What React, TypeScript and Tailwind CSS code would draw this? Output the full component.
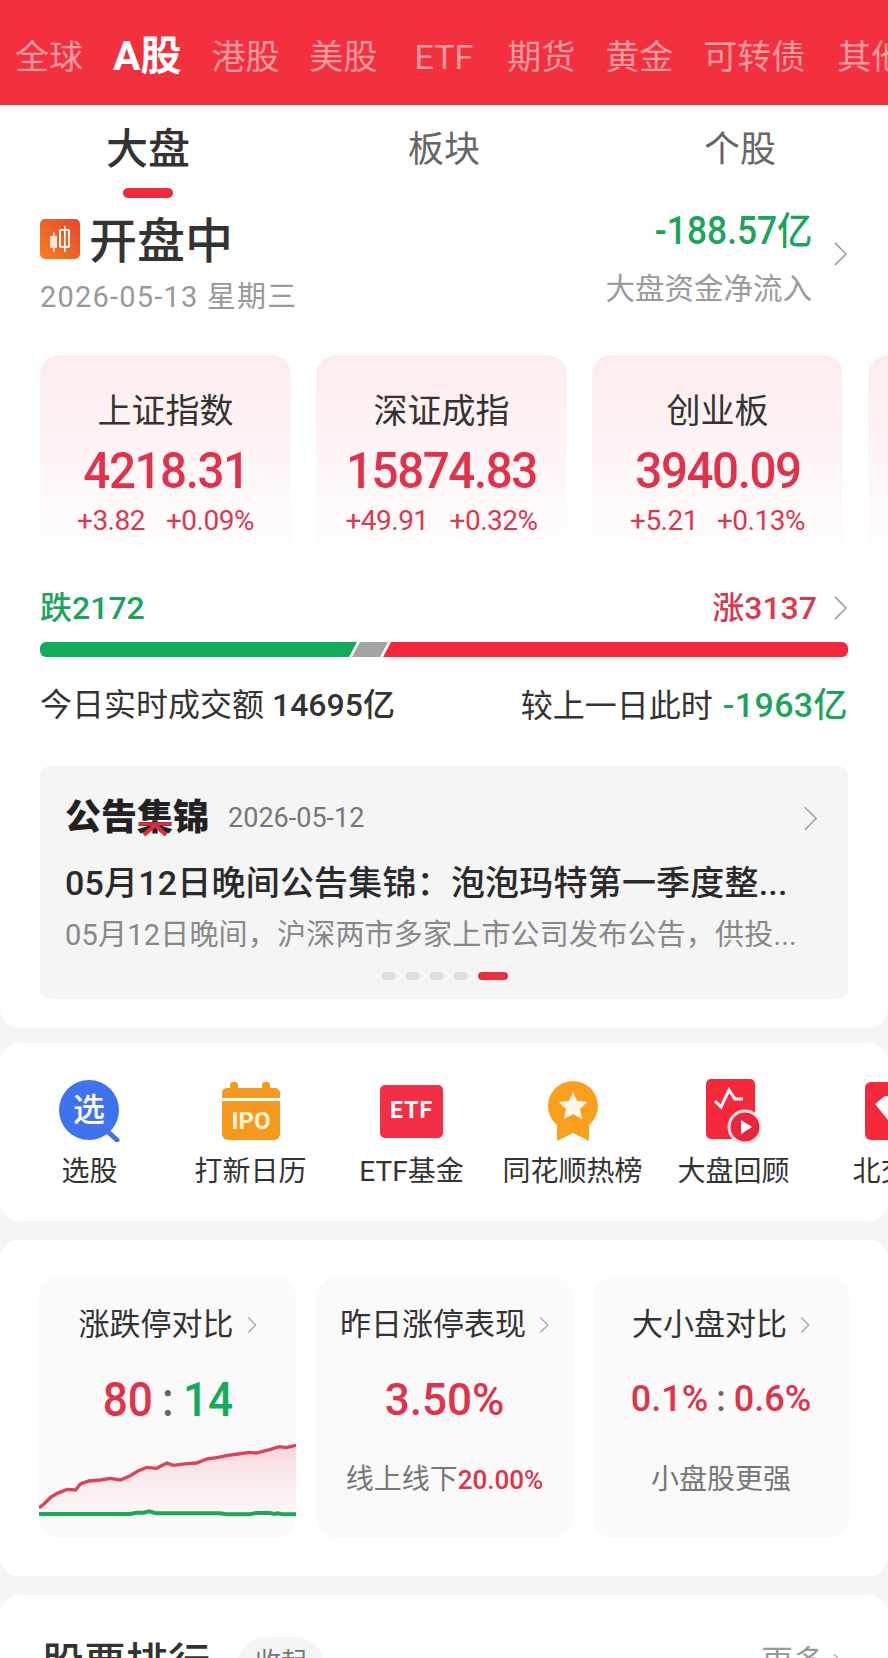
import React from "react";

const FONT = "font-['Roboto','Noto_Sans_CJK_SC',sans-serif]";

function Chevron({ className }: { className: string }) {
  return (
    <svg viewBox="0 0 16 28" fill="none" className={className}>
      <path d="M2 2 L14 14 L2 26" stroke="#a0a0a0" strokeWidth="1.8" strokeLinejoin="round" />
    </svg>
  );
}

function IndexCard({ name, value, a, b, gap }: { name: string; value: string; a: string; b: string; gap: string }) {
  return (
    <div className="w-[251px] h-[218px] shrink-0 rounded-[20px] bg-gradient-to-b from-[#fdecee] to-[#ffffff] flex flex-col items-center pt-[37px]">
      <div className="h-[38px] text-[34px] leading-[38px] text-[#333333]">{name}</div>
      <div className="h-[52px] mt-[15px] text-[50px] leading-[52px] font-medium text-[#e0324a] tracking-[-1.5px] scale-x-[.95]">{value}</div>
      <div className={`h-[32px] mt-[8px] flex ${gap} text-[28px] leading-[32px] text-[#d9394e] tracking-[-0.5px]`}>
        <span>{a}</span>
        <span>{b}</span>
      </div>
    </div>
  );
}

function Quick({ label, children }: { label: string; children: React.ReactNode }) {
  return (
    <div className="w-[161px] shrink-0 flex flex-col items-center">
      <div className="h-[68px] flex items-center justify-center">{children}</div>
      <div className="mt-[10px] text-[28px] leading-[34px] text-[#333333] whitespace-nowrap">{label}</div>
    </div>
  );
}

const redPts =
  "25,322 40,310 60,290 80,278 110,266 135,268 150,250 175,241 210,238 240,233 270,238 300,225 325,210 350,200 380,203 410,187 430,194 470,189 500,187 530,175 565,170 590,165 625,160 660,155 680,157 720,147 750,138 770,141 800,134";
const greenPts =
  "25,340 300,340 320,336 340,336 358,332 378,338 570,338 590,341 660,341 680,337 720,337 735,340 745,338 760,341 800,341";

function StatCard({ title, children, className }: { title: string; children: React.ReactNode; className: string }) {
  return (
    <div className={`${className} h-[261px] rounded-[20px] bg-[#fafafa] overflow-hidden flex flex-col items-center pt-[31px]`}>
      <div className="flex items-center gap-[13px] h-[34px]">
        <span className="text-[31px] leading-[34px] text-[#333333] whitespace-nowrap">{title}</span>
        <Chevron className="w-[10px] h-[20px]" />
      </div>
      {children}
    </div>
  );
}

export default function App() {
  return (
    <div className={`${FONT} w-[888px] h-[1658px] overflow-hidden bg-[#f5f5f5]`}>
      <div className="h-[105px] bg-[#f3303e] flex items-center pl-[15px] gap-[30px] pt-[9px] overflow-hidden whitespace-nowrap text-[34px] text-[#fb9aa0]">
        <span className="shrink-0">全球</span>
        <span className="shrink-0 text-[41px] font-bold text-white">A股</span>
        <span className="shrink-0">港股</span>
        <span className="shrink-0">美股</span>
        <span className="shrink-0 pl-[7px] pr-[4px]">ETF</span>
        <span className="shrink-0">期货</span>
        <span className="shrink-0">黄金</span>
        <span className="shrink-0">可转债</span>
        <span className="shrink-0 ml-[2px]">其他</span>
      </div>

      <div className="h-[923px] bg-white rounded-b-[20px]">
        <div className="grid grid-cols-3 h-[94px]">
          <div className="flex flex-col items-center pt-[21px]">
            <span className="text-[42px] leading-[48px] font-medium text-[#333333]">大盘</span>
            <span className="mt-[14px] w-[50px] h-[10px] rounded-full bg-[#ee2b3c]"></span>
          </div>
          <div className="flex flex-col items-center pt-[21px]">
            <span className="text-[36px] leading-[48px] text-[#666666]">板块</span>
          </div>
          <div className="flex flex-col items-center pt-[21px]">
            <span className="text-[36px] leading-[48px] text-[#666666]">个股</span>
          </div>
        </div>

        <div className="flex justify-between pl-[40px] pr-[40px] h-[156px] pt-[12px]">
          <div>
            <div className="flex items-center gap-[9px] h-[56px]">
              <svg viewBox="0 0 40 40" className="w-[40px] h-[40px]">
                <defs>
                  <linearGradient id="kg" x1="1" y1="0" x2="0" y2="1">
                    <stop offset="0" stopColor="#e8452c" />
                    <stop offset="1" stopColor="#f68022" />
                  </linearGradient>
                </defs>
                <rect width="40" height="40" rx="5" fill="url(#kg)" />
                <rect x="10" y="17" width="7" height="12" rx="1" fill="#ffe6d8" />
                <rect x="13" y="13" width="1.6" height="20" fill="#ffe6d8" />
                <rect x="20" y="11" width="9" height="17" rx="1" fill="none" stroke="#fff" strokeWidth="2" />
                <rect x="24" y="7" width="1.6" height="26" fill="#fff" />
              </svg>
              <span className="text-[48px] leading-[56px] font-medium text-[#333333] mt-[6px]">开盘中</span>
            </div>
            <div className="mt-[13px] text-[29px] leading-[34px] text-[#999999] whitespace-nowrap tracking-[1.2px]">2026-05-13 星期三</div>
          </div>
          <div className="flex items-start gap-[21px] h-[100px]">
            <div className="flex flex-col items-end mt-[-1px]">
              <div className="text-[38px] leading-[42px] font-medium text-[#1ca45c] whitespace-nowrap origin-right scale-x-[.93]">-188.57亿</div>
              <div className="mt-[21px] text-[29.5px] leading-[32px] text-[#9a9a9a] whitespace-nowrap">大盘资金净流入</div>
            </div>
            <Chevron className="w-[15px] h-[26px] mt-[30px]" />
          </div>
        </div>

        <div className="flex gap-[25px] pl-[40px] overflow-hidden">
          <IndexCard name="上证指数" value="4218.31" a="+3.82" b="+0.09%" gap="gap-[21px]" />
          <IndexCard name="深证成指" value="15874.83" a="+49.91" b="+0.32%" gap="gap-[21px]" />
          <IndexCard name="创业板" value="3940.09" a="+5.21" b="+0.13%" gap="gap-[19px]" />
          <IndexCard name="" value="" a="" b="" gap="" />
        </div>

        <div className="mx-[40px] mt-[19px] flex items-center justify-between h-[32px]">
          <span className="text-[32px] leading-[32px] text-[#1ca45c] font-medium">跌2172</span>
          <div className="flex items-center gap-[16px]">
            <span className="text-[32px] leading-[32px] text-[#d9394e] font-medium">涨3137</span>
            <Chevron className="w-[15px] h-[26px]" />
          </div>
        </div>

        <div className="mx-[40px] mt-[18px] h-[15px] flex rounded-[6px] overflow-hidden">
          <div className="w-[317px] bg-[#12ab59] [clip-path:polygon(0_0,100%_0,calc(100%-8px)_100%,0_100%)]"></div>
          <div className="w-[36px] ml-[-5px] bg-[#a3a3a3] [clip-path:polygon(8px_0,100%_0,calc(100%-8px)_100%,0_100%)]"></div>
          <div className="flex-1 ml-[-5px] bg-[#f4283a] [clip-path:polygon(8px_0,100%_0,100%_100%,0_100%)]"></div>
        </div>

        <div className="mx-[40px] mt-[31px] flex items-center justify-between h-[34px] text-[32px] leading-[34px] text-[#333333] whitespace-nowrap">
          <div>
            今日实时成交额 <span className="font-medium">14695亿</span>
          </div>
          <div>
            较上一日此时 <span className="ml-[2px] font-medium text-[#1ca45c] text-[34px] tracking-[0.4px]">-1963亿</span>
          </div>
        </div>

        <div className="mx-[40px] mt-[44px] h-[233px] rounded-[10px] bg-[#f5f5f5] pl-[25px] pr-[30px] pt-[33px]">
          <div className="flex items-center h-[38px]">
            <span className="text-[36px] leading-[38px] font-black text-[#222222]">
              公告
              <span className="relative">
                集
                <svg viewBox="0 0 36 18" className="absolute left-0 bottom-[2px] w-[36px] h-[18px]">
                  <path d="M2 5 H34" stroke="#d8303c" strokeWidth="3.5" />
                  <path d="M18 6 L7 16 M18 6 L29 16" stroke="#d8303c" strokeWidth="4" />
                </svg>
              </span>
              锦
            </span>
            <span className="ml-[19px] text-[27px] leading-[32px] text-[#777777]">2026-05-12</span>
            <Chevron className="ml-auto w-[15px] h-[27px]" />
          </div>
          <div className="mt-[26px] text-[34px] leading-[40px] font-medium text-[#2a2a2a] whitespace-nowrap tracking-[0.2px]">05月12日晚间公告集锦：泡泡玛特第一季度整...</div>
          <div className="mt-[14px] text-[29px] leading-[36px] text-[#888888] whitespace-nowrap tracking-[0.2px]">05月12日晚间，沪深两市多家上市公司发布公告，供投...</div>
          <div className="mt-[19px] flex justify-center gap-[10px] ml-[6px]">
            <span className="w-[14px] h-[8px] rounded-full bg-[#dedede]"></span>
            <span className="w-[14px] h-[8px] rounded-full bg-[#dedede]"></span>
            <span className="w-[14px] h-[8px] rounded-full bg-[#dedede]"></span>
            <span className="w-[14px] h-[8px] rounded-full bg-[#dedede]"></span>
            <span className="w-[30px] h-[8px] rounded-full bg-[#e9303f]"></span>
          </div>
        </div>
      </div>

      <div className="mt-[15px] h-[178px] bg-white rounded-[20px] overflow-hidden flex pl-[9px] pt-[34px]">
        <Quick label="选股">
          <svg viewBox="0 0 62 62" className="w-[62px] h-[62px]">
            <circle cx="30" cy="30" r="30" fill="#3f73ee" />
            <path d="M47 50 L58 60" stroke="#3f73ee" strokeWidth="5" strokeLinecap="round" />
            <text x="30" y="41" textAnchor="middle" fontSize="32" fontWeight="500" fill="#fff" fontFamily="Noto Sans CJK SC">选</text>
          </svg>
        </Quick>
        <Quick label="打新日历">
          <svg viewBox="0 0 58 58" className="w-[58px] h-[58px]">
            <rect x="8" y="0" width="8" height="8" rx="3" fill="#f59a1e" />
            <rect x="40" y="0" width="8" height="8" rx="3" fill="#f59a1e" />
            <path d="M0 11 a5 5 0 0 1 5 -5 h48 a5 5 0 0 1 5 5 v5 h-58z" fill="#f59a1e" />
            <path d="M0 19 h58 v33 a6 6 0 0 1 -6 6 h-46 a6 6 0 0 1 -6 -6z" fill="#f59a1e" />
            <text x="29" y="47" textAnchor="middle" fontSize="24" fontWeight="700" fill="#fff3d8" fontFamily="Roboto">IPO</text>
          </svg>
        </Quick>
        <Quick label="ETF基金">
          <div className="w-[63px] h-[53px] rounded-[5px] bg-[#f42f45] flex items-center justify-center text-[23px] font-bold text-white tracking-[1px]">ETF</div>
        </Quick>
        <Quick label="同花顺热榜">
          <svg viewBox="0 0 50 60" className="w-[50px] h-[60px]">
            <path d="M9 36 V60 L25 52 L41 60 V36z" fill="#f9a11f" />
            <circle cx="25" cy="25" r="25" fill="#f9a11f" />
            <path d="M25 11 L29 20 L39 21 L32 28 L34 38 L25 33 L16 38 L18 28 L11 21 L21 20z" fill="#fff8ea" />
          </svg>
        </Quick>
        <Quick label="大盘回顾">
          <svg viewBox="0 0 55 64" className="w-[55px] h-[64px]">
            <rect x="0" y="0" width="49" height="60" rx="5" fill="#f5283c" />
            <path d="M9 22 L15 28 L23 11 L29 20 L37 20" fill="none" stroke="#fff" strokeWidth="3" />
            <circle cx="39" cy="48" r="16" fill="#e9273c" stroke="#ffe4e6" strokeWidth="3" />
            <path d="M35 41 L46 48 L35 55z" fill="#fff" />
          </svg>
        </Quick>
        <Quick label="北交所">
          <svg viewBox="0 0 60 58" className="w-[60px] h-[58px]">
            <rect x="0" y="0" width="60" height="58" rx="6" fill="#f5283c" />
            <path d="M10 22 L20 14 H36 L46 22 L28 44z" fill="#fff" />
          </svg>
        </Quick>
      </div>

      <div className="mt-[19px] h-[336px] bg-white rounded-[20px] flex pl-[39px] pt-[37px] gap-[20px]">
        <StatCard title="涨跌停对比" className="w-[257px]">
          <div className="mt-[33px] flex items-center text-[48px] leading-[50px] font-medium whitespace-nowrap scale-x-[.92]">
            <span className="text-[#e0324a]">80</span>
            <span className="mx-[10px] text-[#666666]">:</span>
            <span className="text-[#12ab59]">14</span>
          </div>
          <svg viewBox="25 118 775 240" preserveAspectRatio="none" className="w-[257px] h-[80px] mt-[15px] shrink-0">
            <defs>
              <linearGradient id="rf" x1="0" y1="0" x2="0" y2="1">
                <stop offset="0" stopColor="#f6c9cf" stopOpacity="0.75" />
                <stop offset="1" stopColor="#fdf0f1" stopOpacity="0.3" />
              </linearGradient>
            </defs>
            <polygon points={`${redPts} 800,340 25,340`} fill="url(#rf)" />
            <polyline points={redPts} fill="none" stroke="#dd4257" strokeWidth="10" />
            <polyline points={greenPts} fill="none" stroke="#1fa65e" strokeWidth="12" />
          </svg>
        </StatCard>
        <StatCard title="昨日涨停表现" className="w-[257px]">
          <div className="mt-[33px] text-[44px] leading-[50px] font-medium text-[#e0324a]">3.50%</div>
          <div className="mt-[38px] text-[28px] leading-[34px] text-[#777777] whitespace-nowrap">
            线上线下<span className="font-medium text-[#e0324a] text-[26px]">20.00%</span>
          </div>
        </StatCard>
        <StatCard title="大小盘对比" className="w-[256px]">
          <div className="mt-[34px] flex items-center text-[36px] leading-[46px] font-medium whitespace-nowrap">
            <span className="text-[#e0324a]">0.1%</span>
            <span className="mx-[8px] text-[#666666]">:</span>
            <span className="text-[#e0324a]">0.6%</span>
          </div>
          <div className="mt-[41px] text-[28px] leading-[34px] text-[#777777] whitespace-nowrap">小盘股更强</div>
        </StatCard>
      </div>

      <div className="mt-[19px] h-[100px] bg-white rounded-t-[20px] flex items-start pl-[42px] pr-[45px] pt-[45px]">
        <span className="text-[42px] leading-[48px] font-medium text-[#333333]">股票排行</span>
        <span className="ml-[27px] mt-[-3px] w-[88px] h-[60px] rounded-full bg-[#f5f5f5] flex justify-center pt-[9px] text-[26px] leading-[32px] text-[#777777]">收起</span>
        <span className="ml-auto mt-[5px] flex items-center gap-[8px] text-[32px] leading-[34px] text-[#999999]">
          更多
          <Chevron className="w-[10px] h-[22px]" />
        </span>
      </div>
    </div>
  );
}
